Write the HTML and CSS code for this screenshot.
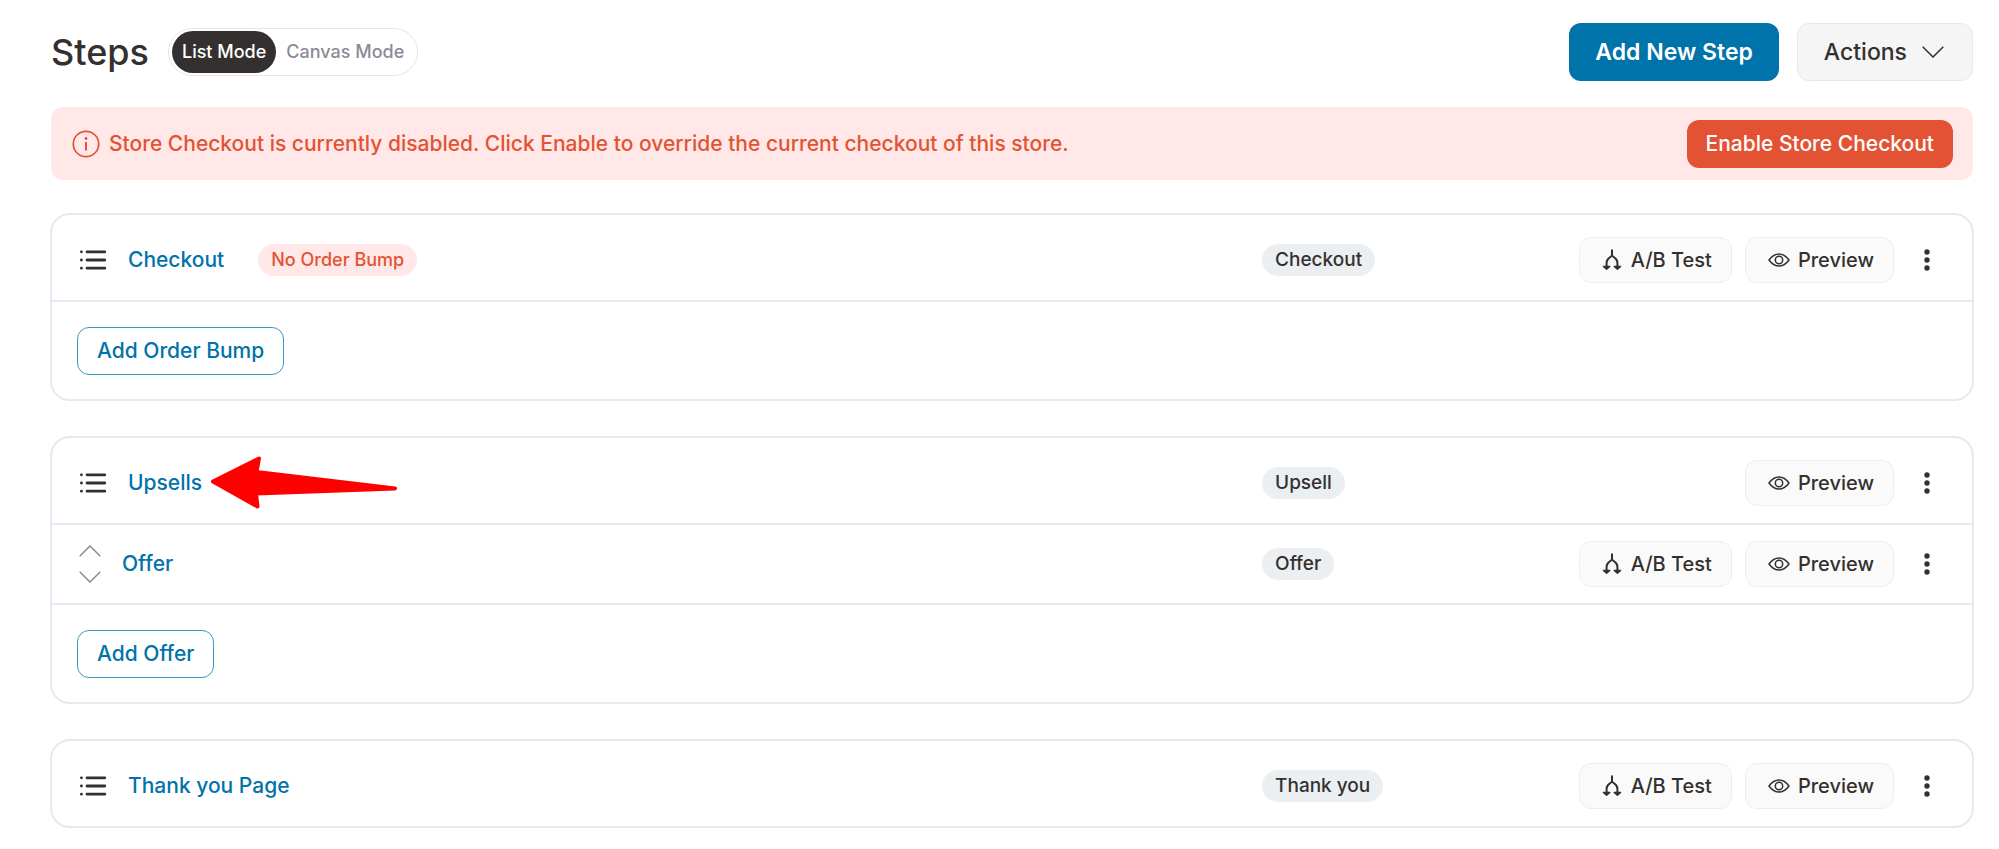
FILE: index.html
```html
<!DOCTYPE html>
<html lang="en">
<head>
    <meta charset="UTF-8">
    <meta name="viewport" content="width=device-width, initial-scale=1.0">
    <title>Steps</title>
    <link rel="stylesheet" href="styles.css">
</head>
<body>
    <!-- shared icons -->
    <svg class="sprite" aria-hidden="true">
        <symbol id="icon-list" viewBox="0 0 28 22">
            <g fill="none" stroke="currentColor" stroke-width="2.8" stroke-linecap="round">
                <path d="M8 2.8h17.8M8 11h17.8M8 19.2h17.8"/>
                <path d="M2.4 2.8h.1M2.4 11h.1M2.4 19.2h.1"/>
            </g>
        </symbol>
        <symbol id="icon-split" viewBox="0 0 20 22">
            <g fill="none" stroke="currentColor" stroke-width="2" stroke-linecap="round" stroke-linejoin="round">
                <path d="M10 1.2v5.3M4.6 18.5V13.5C4.6 9.5 8 9 10 6.5C12 9 15.4 9.5 15.4 13.5V18.5"/>
                <path d="M1.4 17.4l3.2 2.8 3.2-2.8zM12.2 17.4l3.2 2.8 3.2-2.8z" fill="currentColor" stroke-width="1.4"/>
            </g>
        </symbol>
        <symbol id="icon-eye" viewBox="0 0 22 16">
            <g fill="none" stroke="currentColor" stroke-width="1.5" stroke-linejoin="round">
                <path d="M1 8C4 3.8 7.2 1.9 11 1.9S18 3.8 21 8C18 12.2 14.8 14.1 11 14.1S4 12.2 1 8z"/>
                <circle cx="11" cy="8" r="3.7"/>
            </g>
        </symbol>
        <symbol id="icon-dots" viewBox="0 0 6 22">
            <g fill="currentColor">
                <circle cx="3" cy="3" r="2.7"/>
                <circle cx="3" cy="11" r="2.7"/>
                <circle cx="3" cy="19" r="2.7"/>
            </g>
        </symbol>
        <symbol id="icon-down" viewBox="0 0 22 12">
            <path d="M.7.7L11 11 21.3.7" fill="none" stroke="currentColor" stroke-width="1.5"/>
        </symbol>
        <symbol id="icon-up" viewBox="0 0 22 12">
            <path d="M.7 11.3L11 1 21.3 11.3" fill="none" stroke="currentColor" stroke-width="1.5"/>
        </symbol>
    </svg>

    <header class="header">
        <h1>Steps</h1>
        <div class="mode-switch">
            <button type="button" class="mode active">List Mode</button>
            <button type="button" class="mode">Canvas Mode</button>
        </div>
        <div class="header-actions">
            <button type="button" class="btn btn-primary">Add New Step</button>
            <button type="button" class="btn btn-menu" aria-haspopup="true">Actions
                <svg class="icon-chevron"><use href="#icon-down"/></svg>
            </button>
        </div>
    </header>

    <div class="notice">
        <svg class="icon-info" viewBox="0 0 28 28" aria-hidden="true">
            <circle cx="14" cy="14" r="12.7" fill="none" stroke="currentColor" stroke-width="1.7"/>
            <circle cx="14" cy="8.5" r="1.4" fill="currentColor"/>
            <path d="M14 12v8.5" stroke="currentColor" stroke-width="2"/>
        </svg>
        <p>Store Checkout is currently disabled. Click Enable to override the current checkout of this store.</p>
        <button type="button" class="btn-enable">Enable Store Checkout</button>
    </div>

    <main class="steps">
        <section class="card">
            <div class="row">
                <div class="step-name">
                    <svg class="icon-list"><use href="#icon-list"/></svg>
                    <a href="#checkout">Checkout</a>
                    <span class="tag tag-warning">No Order Bump</span>
                </div>
                <div class="step-info">
                    <span class="tag">Checkout</span>
                    <div class="step-actions">
                        <button type="button" class="btn-small"><svg class="icon-split"><use href="#icon-split"/></svg>A/B Test</button>
                        <button type="button" class="btn-small"><svg class="icon-eye"><use href="#icon-eye"/></svg>Preview</button>
                        <button type="button" class="btn-more" aria-label="More"><svg class="icon-dots"><use href="#icon-dots"/></svg></button>
                    </div>
                </div>
            </div>
            <div class="card-footer">
                <button type="button" class="btn-outline">Add Order Bump</button>
            </div>
        </section>

        <section class="card">
            <div class="row">
                <div class="step-name">
                    <svg class="icon-list"><use href="#icon-list"/></svg>
                    <a href="#upsells" class="pointed">Upsells
                        <svg class="pointer" viewBox="0 0 190 56" aria-hidden="true">
                            <path d="M4 26.5L50 3.5 47.5 17 186 33.5 47 38.5 48.5 51.5z"/>
                        </svg>
                    </a>
                </div>
                <div class="step-info">
                    <span class="tag">Upsell</span>
                    <div class="step-actions">
                        <button type="button" class="btn-small"><svg class="icon-eye"><use href="#icon-eye"/></svg>Preview</button>
                        <button type="button" class="btn-more" aria-label="More"><svg class="icon-dots"><use href="#icon-dots"/></svg></button>
                    </div>
                </div>
            </div>
            <div class="row row-offer">
                <div class="step-name">
                    <div class="sort">
                        <button type="button" aria-label="Move up"><svg class="icon-chevron"><use href="#icon-up"/></svg></button>
                        <button type="button" aria-label="Move down"><svg class="icon-chevron"><use href="#icon-down"/></svg></button>
                    </div>
                    <a href="#offer">Offer</a>
                </div>
                <div class="step-info">
                    <span class="tag">Offer</span>
                    <div class="step-actions">
                        <button type="button" class="btn-small"><svg class="icon-split"><use href="#icon-split"/></svg>A/B Test</button>
                        <button type="button" class="btn-small"><svg class="icon-eye"><use href="#icon-eye"/></svg>Preview</button>
                        <button type="button" class="btn-more" aria-label="More"><svg class="icon-dots"><use href="#icon-dots"/></svg></button>
                    </div>
                </div>
            </div>
            <div class="card-footer">
                <button type="button" class="btn-outline">Add Offer</button>
            </div>
        </section>

        <section class="card">
            <div class="row">
                <div class="step-name">
                    <svg class="icon-list"><use href="#icon-list"/></svg>
                    <a href="#thank-you">Thank you Page</a>
                </div>
                <div class="step-info">
                    <span class="tag">Thank you</span>
                    <div class="step-actions">
                        <button type="button" class="btn-small"><svg class="icon-split"><use href="#icon-split"/></svg>A/B Test</button>
                        <button type="button" class="btn-small"><svg class="icon-eye"><use href="#icon-eye"/></svg>Preview</button>
                        <button type="button" class="btn-more" aria-label="More"><svg class="icon-dots"><use href="#icon-dots"/></svg></button>
                    </div>
                </div>
            </div>
        </section>
    </main>
</body>
</html>
```
FILE: styles.css
```css
* {
    box-sizing: border-box;
}
body {
    font-family: Inter, "Liberation Sans", sans-serif;
    font-size: 21px;
    font-weight: 500;
    line-height: 24px;
    color: #353030;
    background-color: #fff;
    margin: 0;
    padding: 23px 25px 21px 50px;
}
button {
    font: inherit;
    color: inherit;
    cursor: pointer;
    white-space: nowrap;
}
svg {
    flex-shrink: 0;
}
.sprite {
    display: none;
}

/* header */
.header {
    display: flex;
    align-items: center;
    margin: 0 1px 26px;
}
.header h1 {
    font-size: 36px;
    font-weight: 500;
    line-height: 44px;
    margin: 0 19px 0 0;
}
.mode-switch {
    display: flex;
    height: 48px;
    padding: 2px 3px;
    border: 1px solid #e6e6f2;
    border-radius: 24px;
}
.mode {
    padding: 0 10px;
    border: none;
    border-radius: 21px;
    background: none;
    color: #8c8a96;
    font-size: 18px;
}
.mode.active {
    background-color: #353030;
    color: #fff;
}
.header-actions {
    display: flex;
    gap: 18px;
    margin-left: auto;
}
.btn {
    display: flex;
    align-items: center;
    height: 58px;
    padding: 0 26px;
    border: none;
    border-radius: 12px;
    font-size: 23px;
}
.btn-primary {
    background-color: #0073aa;
    color: #fff;
    font-weight: 600;
}
.btn-menu {
    gap: 15px;
    padding-right: 28px;
    border: 1px solid #e6e6f2;
    background-color: #f5f5f5;
}
.icon-chevron {
    display: block;
    width: 22px;
    height: 12px;
}

/* disabled notice */
.notice {
    display: flex;
    align-items: center;
    min-height: 73px;
    margin: 0 1px 33px;
    padding: 12px 20px 12px 21px;
    border-radius: 12px;
    background-color: #ffe8e7;
    color: #e35333;
}
.notice p {
    margin: 0 0 0 9px;
}
.icon-info {
    width: 28px;
    height: 28px;
}
.btn-enable {
    height: 48px;
    margin-left: auto;
    padding: 0 19px;
    border: none;
    border-radius: 12px;
    background-color: #e35333;
    color: #fff;
}

/* steps */
.steps {
    display: flex;
    flex-direction: column;
    gap: 35px;
}
.card {
    border: 2px solid #e8e8f2;
    border-radius: 20px;
}
.row {
    display: flex;
    align-items: center;
    min-height: 85px;
    padding: 4px 25px 0 27px;
}
.row-offer {
    min-height: 80px;
    padding-top: 0;
    border-top: 2px solid #e8e8f2;
}
.step-name {
    display: flex;
    flex: 19 1 0;
    align-items: center;
}
.step-name a {
    margin-left: 21px;
    color: #0073aa;
    text-decoration: none;
}
.step-info {
    display: flex;
    flex: 11 1 0;
    align-items: center;
    justify-content: space-between;
}
.step-actions {
    display: flex;
    align-items: center;
    gap: 13px;
    margin-left: auto;
}
.tag {
    padding: 4px 13px;
    border-radius: 16px;
    background-color: #ebeff2;
    font-size: 19px;
    white-space: nowrap;
}
.tag-warning {
    margin-left: 34px;
    background-color: #ffe8e7;
    color: #e35333;
    font-size: 18px;
}
.icon-list {
    width: 28px;
    height: 22px;
}
.sort {
    display: flex;
    flex-direction: column;
    gap: 14px;
}
.sort button {
    padding: 0;
    border: none;
    background: none;
    color: #8c8a90;
}

/* arrow pointing at the upsell step */
.pointed {
    position: relative;
}
.pointer {
    position: absolute;
    top: -16px;
    left: 100%;
    width: 190px;
    height: 56px;
    margin-left: 7px;
    fill: #fe0000;
    stroke: #fe0000;
    stroke-width: 4px;
    stroke-linejoin: round;
}

/* step buttons */
.btn-small {
    display: flex;
    align-items: center;
    height: 46px;
    padding: 0 19px 0 22px;
    border: 1px solid #eeeeee;
    border-radius: 12px;
    background-color: #fafafa;
    font-size: 20px;
}
.icon-split {
    width: 20px;
    height: 22px;
    margin-right: 9px;
}
.icon-eye {
    width: 22px;
    height: 16px;
    margin-right: 8px;
}
.btn-more {
    display: flex;
    align-items: center;
    justify-content: center;
    width: 40px;
    height: 46px;
    padding: 0;
    border: none;
    background: none;
}
.icon-dots {
    width: 6px;
    height: 22px;
}
.card-footer {
    padding: 25px 25px 24px;
    border-top: 2px solid #e8e8f2;
}
.btn-outline {
    display: block;
    height: 48px;
    padding: 0 19px;
    border: 1px solid #3b97c3;
    border-radius: 12px;
    background-color: #fff;
    color: #0073aa;
}
```
